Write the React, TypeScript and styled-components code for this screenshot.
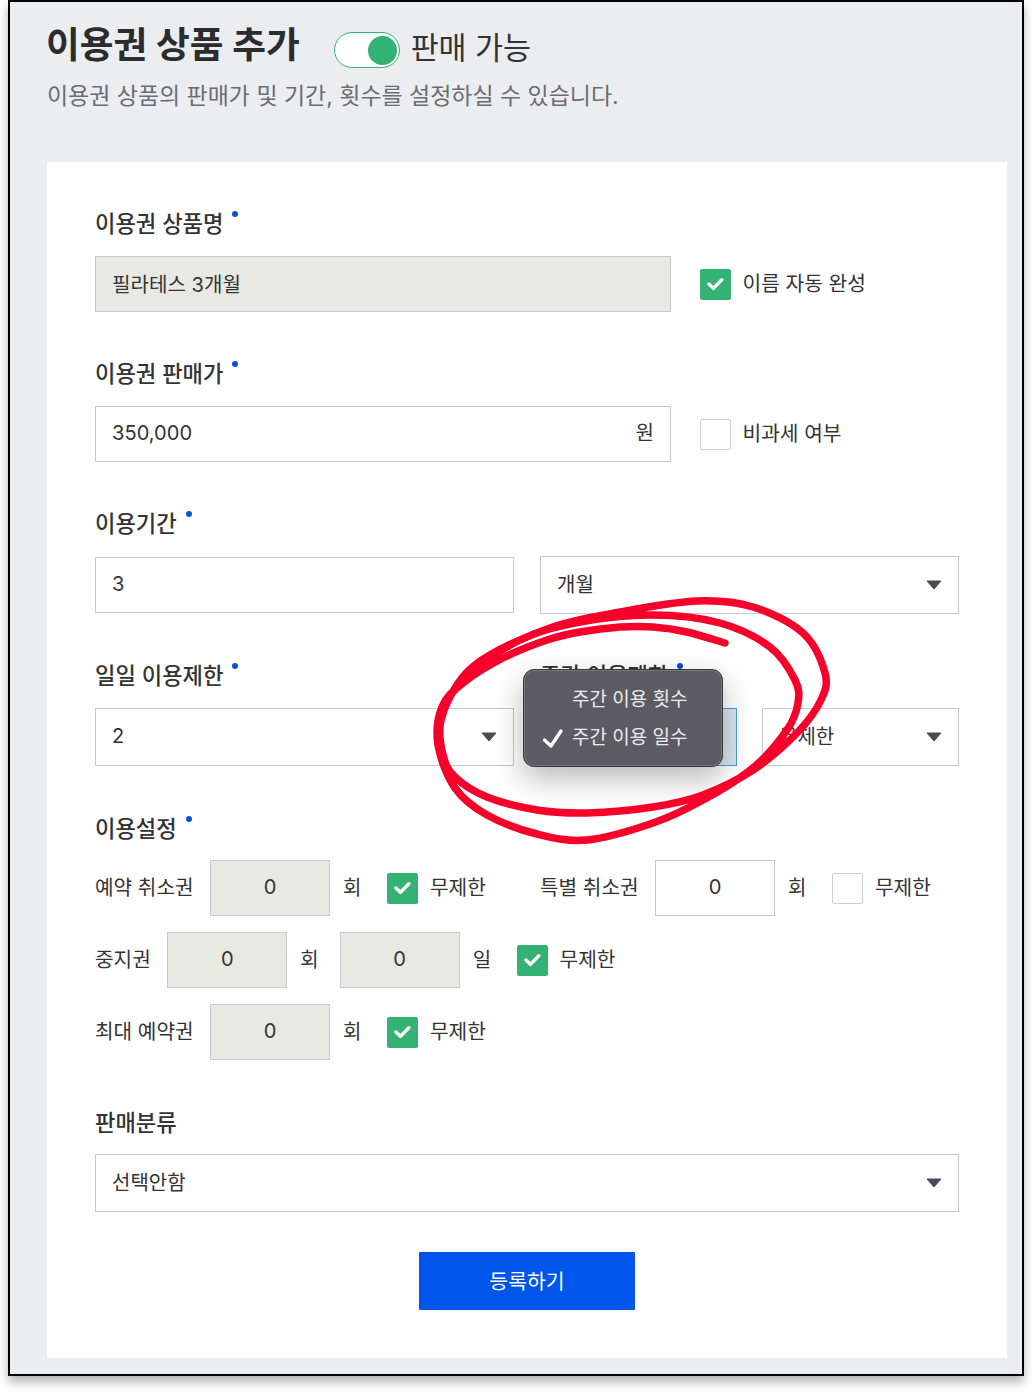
import React from "react";
import styled, { createGlobalStyle } from "styled-components";

const FONT = `Inter, "Noto Sans CJK KR", "Noto Sans", sans-serif`;

const Global = createGlobalStyle`
  html, body { margin: 0; padding: 0; background: #fff; }
  body { font-family: ${FONT}; color: #333; }
  * { box-sizing: border-box; }
`;

const Page = styled.div`
  position: relative;
  width: 1032px;
  height: 1392px;
  padding: 0 8px;
  overflow: hidden;
`;

const Frame = styled.div`
  width: 1016px;
  height: 1376px;
  border: 2px solid #000;
  background: #ebedf0;
  padding: 0 15px 0 37px;
  box-shadow: 0 6px 10px rgba(0, 0, 0, 0.3);
`;

const Header = styled.header`
  height: 160px;
  padding-top: 17px;
`;

const TitleRow = styled.div`
  display: flex;
  align-items: center;
  height: 50px;
`;

const Title = styled.h1`
  margin: 2px 0 0 -1px;
  font-size: 36.7px;
  line-height: 50px;
  font-weight: 700;
  color: #2b2c2e;
`;

const Toggle = styled.span`
  position: relative;
  display: block;
  width: 66px;
  height: 36px;
  margin: 11px 11px 0 34px;
  border: 1px solid #33b274;
  border-radius: 18px;
  background: #fff;
`;

const Thumb = styled.span`
  position: absolute;
  top: 3px;
  right: 2px;
  width: 29px;
  height: 29px;
  border-radius: 50%;
  background: #33b274;
`;

const ToggleText = styled.span`
  font-size: 30.4px;
  line-height: 50px;
  margin-top: 7px;
  color: #333;
`;

const Subtitle = styled.p`
  margin: 5px 0 0;
  font-size: 22.96px;
  line-height: 44px;
  color: #6a6d72;
`;

const Card = styled.main`
  height: 1196px;
  background: #fff;
  padding: 46px 48px 0;
`;

const Section = styled.section<{ $top?: number }>`
  margin-top: ${(p) => p.$top ?? 46}px;
`;

const Label = styled.div<{ $gap?: number }>`
  position: relative;
  display: inline-block;
  height: 32px;
  margin-bottom: ${(p) => p.$gap ?? 16}px;
  font-size: 22.2px;
  line-height: 32px;
  font-weight: 500;
  color: #333;
  vertical-align: top;
`;

const Dot = styled.i`
  position: absolute;
  top: 3px;
  right: -15px;
  width: 6px;
  height: 6px;
  border-radius: 50%;
  background: #0b50d8;
`;

const FieldRow = styled.div<{ $h?: number }>`
  display: flex;
  align-items: center;
  height: ${(p) => p.$h ?? 58}px;
`;

const TwoCols = styled.div`
  display: grid;
  grid-template-columns: 419px 419px;
  column-gap: 26px;
  align-items: center;
`;

const Input = styled.input<{ $w?: number; $gray?: boolean; $center?: boolean }>`
  display: block;
  width: ${(p) => (p.$w ? `${p.$w}px` : "100%")};
  height: 56px;
  flex: none;
  padding: 0 16px 2px;
  border: 1px solid #c9c9c7;
  border-radius: 0;
  outline: none;
  background: ${(p) => (p.$gray ? "#e9e9e3" : "#fff")};
  font-family: ${FONT};
  font-size: 20.1px;
  color: #333;
  text-align: ${(p) => (p.$center ? "center" : "left")};
`;

const InputWrap = styled.div`
  position: relative;
  width: 576px;
  flex: none;
`;

const Suffix = styled.span`
  position: absolute;
  top: 0;
  right: 17px;
  font-size: 20px;
  line-height: 55px;
  color: #333;
`;

const Select = styled.div<{ $w?: number; $ml?: number }>`
  display: flex;
  align-items: center;
  justify-content: space-between;
  width: ${(p) => (p.$w ? `${p.$w}px` : "100%")};
  height: 58px;
  flex: none;
  margin-left: ${(p) => p.$ml ?? 0}px;
  padding: 0 16px;
  border: 1px solid #c9c9c7;
  background: #fff;
  font-size: 20px;
  color: #333;
`;

const SelectValue = styled.span`
  padding-bottom: 3px;
`;

const Focused = styled.div`
  width: 197px;
  height: 58px;
  flex: none;
  border: 1px solid #4b9edb;
  background: #d9e6f0;
`;

const Caret = () => (
  <svg width="16" height="10" viewBox="0 0 16 10">
    <path d="M1 1h14L8 9z" fill="#474c59" stroke="#474c59" strokeWidth="1" strokeLinejoin="round" />
  </svg>
);

const CheckRoot = styled.span<{ $on?: boolean }>`
  display: flex;
  align-items: center;
  justify-content: center;
  width: 31px;
  height: 31px;
  flex: none;
  border-radius: 2px;
  border: 1px solid ${(p) => (p.$on ? "#33b274" : "#cfcfcf")};
  background: ${(p) => (p.$on ? "#33b274" : "#fff")};
`;

const Check = ({ on }: { on?: boolean }) => (
  <CheckRoot $on={on}>
    {on && (
      <svg width="17" height="14" viewBox="0 0 17 14">
        <path d="M2 7l4.4 4.4 8.4-8.6" fill="none" stroke="#fff" strokeWidth="3.4" strokeLinecap="round" strokeLinejoin="round" />
      </svg>
    )}
  </CheckRoot>
);

const CheckField = styled.label<{ $ml?: number }>`
  display: flex;
  align-items: center;
  gap: 11.5px;
  margin-left: ${(p) => p.$ml ?? 29}px;
  font-size: 20.3px;
  color: #333;
`;

const CheckText = styled.span`
  padding-bottom: 4px;
`;

const SettingRows = styled.div`
  display: flex;
  flex-direction: column;
  gap: 16px;
`;

const SettingRow = styled.div`
  display: flex;
  align-items: center;
  height: 56px;
`;

const SettingGroup = styled.div`
  display: flex;
  align-items: center;
  width: 445px;
`;

const SettingName = styled.span`
  margin-right: 16.5px;
  padding-bottom: 4px;
  font-size: 20.2px;
  color: #333;
  white-space: nowrap;
`;

const Unit = styled.span<{ $mr?: number }>`
  margin: 0 ${(p) => p.$mr ?? 0}px 0 13px;
  padding-bottom: 4px;
  font-size: 20px;
  color: #333;
`;

const Actions = styled.div`
  display: flex;
  justify-content: center;
  margin-top: 40px;
`;

const Submit = styled.button`
  width: 216px;
  height: 58px;
  padding: 0 0 2px;
  border: 0;
  border-radius: 1px;
  background: #0055ea;
  color: #fff;
  font-family: ${FONT};
  font-size: 20.5px;
`;

const Menu = styled.div`
  position: absolute;
  left: 523px;
  top: 669px;
  width: 200px;
  height: 98px;
  padding-top: 10px;
  border: 1px solid #38383c;
  border-radius: 11px;
  background: #5c5b63;
  box-shadow: inset 0 0 0 1px #77767d, 0 12px 30px rgba(0, 0, 0, 0.28);
`;

const MenuItem = styled.div`
  position: relative;
  height: 38px;
  padding-left: 48px;
  font-size: 19px;
  line-height: 40px;
  color: #ecebee;
`;

const MenuCheck = styled.svg`
  position: absolute;
  left: 18px;
  top: 9px;
`;

const Scribble = styled.svg`
  position: absolute;
  left: 0;
  top: 0;
  pointer-events: none;
`;

const pts: [number, number][] = [
  [725, 643], [687, 632], [653, 627], [620, 627], [580, 632], [547, 640], [503, 658],
  [463, 683], [442, 707], [438, 745], [455, 788], [487, 815], [537, 834], [587, 840],
  [653, 823], [703, 800], [753, 768], [787, 730], [798, 703], [795, 680], [770, 647],
  [720, 623], [653, 615], [580, 622], [520, 640], [462, 680], [441, 720], [443, 755],
  [455, 777], [487, 797], [537, 810], [587, 813], [653, 807], [703, 795], [753, 770],
  [797, 733], [821, 700], [825, 673], [803, 633], [753, 607], [697, 601], [620, 612],
  [550, 628], [475, 665], [443, 710], [439, 726],
];

const smooth = (p: [number, number][]) => {
  let d = `M${p[0][0]} ${p[0][1]}`;
  for (let i = 0; i < p.length - 1; i++) {
    const a = p[Math.max(i - 1, 0)];
    const b = p[i];
    const c = p[i + 1];
    const e = p[Math.min(i + 2, p.length - 1)];
    d += ` C${b[0] + (c[0] - a[0]) / 6} ${b[1] + (c[1] - a[1]) / 6} ${c[0] - (e[0] - b[0]) / 6} ${c[1] - (e[1] - b[1]) / 6} ${c[0]} ${c[1]}`;
  }
  return d;
};

export default function App() {
  return (
    <Page>
      <Global />
      <Frame>
        <Header>
          <TitleRow>
            <Title>이용권 상품 추가</Title>
            <Toggle><Thumb /></Toggle>
            <ToggleText>판매 가능</ToggleText>
          </TitleRow>
          <Subtitle>이용권 상품의 판매가 및 기간, 횟수를 설정하실 수 있습니다.</Subtitle>
        </Header>
        <Card>
          <Section $top={0}>
            <Label>이용권 상품명<Dot /></Label>
            <FieldRow $h={56}>
              <InputWrap><Input $gray readOnly value="필라테스 3개월" /></InputWrap>
              <CheckField><Check on /><CheckText>이름 자동 완성</CheckText></CheckField>
            </FieldRow>
          </Section>
          <Section>
            <Label>이용권 판매가<Dot /></Label>
            <FieldRow $h={56}>
              <InputWrap>
                <Input readOnly value="350,000" />
                <Suffix>원</Suffix>
              </InputWrap>
              <CheckField><Check /><CheckText>비과세 여부</CheckText></CheckField>
            </FieldRow>
          </Section>
          <Section>
            <Label>이용기간<Dot /></Label>
            <TwoCols>
              <Input readOnly value="3" />
              <Select><SelectValue>개월</SelectValue><Caret /></Select>
            </TwoCols>
          </Section>
          <Section>
            <TwoCols>
              <div>
                <Label>일일 이용제한<Dot /></Label>
                <Select><SelectValue>2</SelectValue><Caret /></Select>
              </div>
              <div>
                <Label>주간 이용제한<Dot /></Label>
                <FieldRow>
                  <Focused />
                  <Select $w={197} $ml={25}><SelectValue>무제한</SelectValue><Caret /></Select>
                </FieldRow>
              </div>
            </TwoCols>
          </Section>
          <Section $top={47}>
            <Label $gap={15}>이용설정<Dot /></Label>
            <SettingRows>
              <SettingRow>
                <SettingGroup>
                  <SettingName>예약 취소권</SettingName>
                  <Input $w={120} $gray $center readOnly value="0" />
                  <Unit>회</Unit>
                  <CheckField $ml={26}><Check on /><CheckText>무제한</CheckText></CheckField>
                </SettingGroup>
                <SettingName>특별 취소권</SettingName>
                <Input $w={120} $center readOnly value="0" />
                <Unit>회</Unit>
                <CheckField $ml={26}><Check /><CheckText>무제한</CheckText></CheckField>
              </SettingRow>
              <SettingRow>
                <SettingName>중지권</SettingName>
                <Input $w={120} $gray $center readOnly value="0" />
                <Unit $mr={21}>회</Unit>
                <Input $w={120} $gray $center readOnly value="0" />
                <Unit>일</Unit>
                <CheckField $ml={26}><Check on /><CheckText>무제한</CheckText></CheckField>
              </SettingRow>
              <SettingRow>
                <SettingName>최대 예약권</SettingName>
                <Input $w={120} $gray $center readOnly value="0" />
                <Unit>회</Unit>
                <CheckField $ml={26}><Check on /><CheckText>무제한</CheckText></CheckField>
              </SettingRow>
            </SettingRows>
          </Section>
          <Section $top={47}>
            <Label $gap={15}>판매분류</Label>
            <Select><SelectValue>선택안함</SelectValue><Caret /></Select>
          </Section>
          <Actions><Submit>등록하기</Submit></Actions>
        </Card>
      </Frame>
      <Menu>
        <MenuItem>주간 이용 횟수</MenuItem>
        <MenuItem>
          <MenuCheck width="22" height="22" viewBox="0 0 22 22">
            <path d="M2.5 13l6.5 6L19 4" fill="none" stroke="#fff" strokeWidth="3.3" strokeLinecap="round" strokeLinejoin="round" />
          </MenuCheck>
          주간 이용 일수
        </MenuItem>
      </Menu>
      <Scribble width="1032" height="1392" viewBox="0 0 1032 1392">
        <path d={smooth(pts)} fill="none" stroke="#f6002b" strokeWidth="7.5" strokeLinecap="round" />
      </Scribble>
    </Page>
  );
}
